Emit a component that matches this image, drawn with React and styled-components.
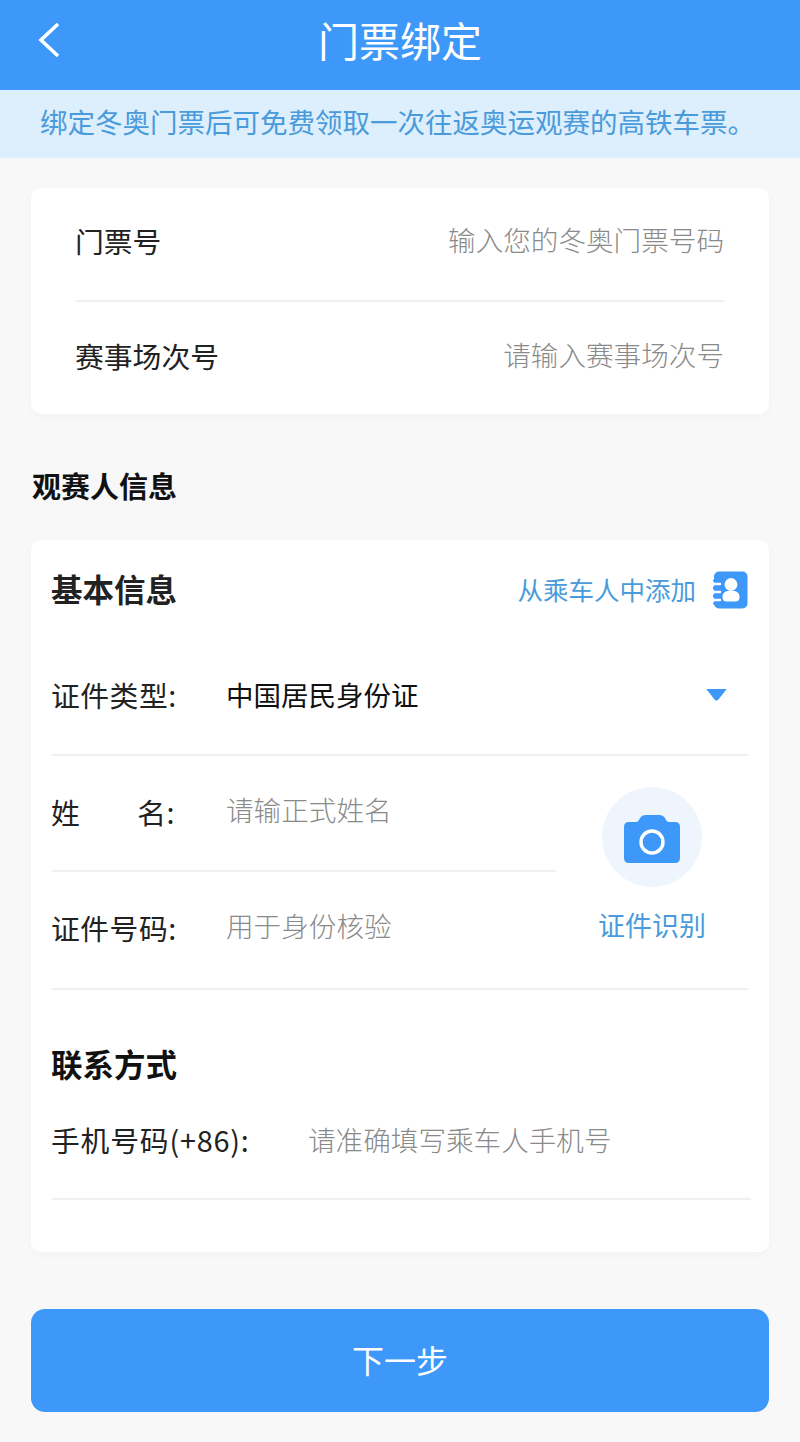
import React from 'react';
import styled, { createGlobalStyle } from 'styled-components';

const GlobalStyle = createGlobalStyle`
  html, body { margin: 0; padding: 0; background: #f8f8f9; }
  body { font-family: "Noto Sans CJK SC", "Noto Sans", sans-serif; }
  * { box-sizing: border-box; }
`;

const Page = styled.div`
  width: 800px;
  height: 1442px;
  overflow: hidden;
  background: #f8f8f9;
  display: flex;
  flex-direction: column;
`;
const Header = styled.header`
  height: 90px;
  background: #3d98f9;
  position: relative;
  display: flex;
  align-items: center;
  justify-content: center;
  color: #fff;
  font-size: 41px;
  font-weight: 400;
  line-height: 1;
  padding-bottom: 12px;
`;
const BackIcon = styled.svg`
  position: absolute;
  left: 36px;
  top: 21px;
`;
const Notice = styled.div`
  height: 68px;
  background: #ddeefc;
  color: #4a9bdb;
  font-size: 27.5px;
  line-height: 62px;
  padding-left: 40px;
  white-space: nowrap;
`;
const Content = styled.div`
  padding: 30px 31px 0;
  display: flex;
  flex-direction: column;
`;
const Card = styled.section`
  background: #fff;
  border-radius: 10px;
  box-shadow: 0 3px 10px rgba(0, 0, 0, 0.025);
`;
const TicketCard = styled(Card)`
  padding: 0 45px;
`;
const TicketRow = styled.div`
  height: ${p => (p.$last ? 112 : 114)}px;
  display: flex;
  align-items: center;
  justify-content: space-between;
  padding-bottom: ${p => (p.$last ? 5 : 7)}px;
  border-bottom: ${p => (p.$last ? 'none' : '2px solid #f0f0f1')};
`;
const TicketLabel = styled.span`
  font-size: 28.8px;
  color: #222;
  margin-left: -1px;
`;
const Hint = styled.span`
  font-size: 27.6px;
  font-weight: 300;
  color: #8a8a8a;
  white-space: nowrap;
  margin-bottom: 4px;
`;
const PhoneHint = styled(Hint)`
  margin-bottom: 0;
`;
const SectionTitle = styled.h2`
  margin: 50px 0 34px 1px;
  font-size: 29px;
  line-height: 42px;
  font-weight: 700;
  color: #111;
`;
const InfoCard = styled(Card)`
  height: 712px;
  padding: 0 21px;
`;
const BasicHead = styled.div`
  height: 100px;
  display: flex;
  align-items: center;
  justify-content: space-between;
`;
const GroupTitle = styled.h3`
  margin: 0 0 4px -1px;
  font-size: 31.5px;
  line-height: 44px;
  font-weight: 700;
  color: #222;
`;
const AddLink = styled.div`
  display: flex;
  align-items: center;
  gap: 17px;
  color: #4a9bdb;
  font-size: 25.5px;
`;
const AddText = styled.span`
  margin-bottom: 4px;
`;
const FieldRow = styled.div`
  height: ${p => p.$height || 116}px;
  display: flex;
  align-items: center;
  padding-bottom: ${p => p.$pad ?? 6}px;
  border-bottom: ${p => (p.$plain ? 'none' : '2px solid #f0f0f1')};
  margin-right: ${p => p.$overhang || 0}px;
`;
const FieldLabel = styled.span`
  width: ${p => p.$width || 175}px;
  flex-shrink: 0;
  margin-left: -1px;
  font-size: 28.8px;
  letter-spacing: ${p => p.$spacing ?? 0.5}px;
  color: #222;
  white-space: nowrap;
`;
const SpacedLabel = styled(FieldLabel)`
  display: flex;
  justify-content: space-between;
  width: 124px;
  margin-right: 51px;
`;
const FieldValue = styled.span`
  flex: 1;
  font-size: 27.5px;
  color: #111;
`;
const Arrow = styled.svg`
  margin-right: 21px;
  margin-top: 2px;
`;
const IdentityBlock = styled.div`
  display: flex;
  border-bottom: 2px solid #f0f0f1;
`;
const IdentityFields = styled.div`
  width: 504px;
`;
const ScanBox = styled.div`
  flex: 1;
  display: flex;
  flex-direction: column;
  align-items: center;
  padding-top: 31px;
`;
const ScanCircle = styled.div`
  width: 100px;
  height: 100px;
  border-radius: 50%;
  background: #eef5fc;
  display: flex;
  align-items: center;
  justify-content: center;
  padding-top: 4px;
`;
const ScanText = styled.span`
  margin-top: 18px;
  color: #4a9bdb;
  font-size: 27px;
  line-height: 40px;
`;
const ContactTitle = styled(GroupTitle)`
  margin-top: 51px;
  margin-bottom: 0;
  color: #111;
`;
const PhoneBlock = styled.div`
  margin-top: 13px;
`;
const NextButton = styled.button`
  margin-top: 57px;
  height: 103px;
  border: none;
  border-radius: 14px;
  background: #3d98f9;
  color: #fff;
  font-family: inherit;
  font-size: 32px;
  font-weight: 400;
  padding: 0 0 3px;
`;

const ContactsIcon = () => (
  <svg width="35" height="38" viewBox="0 0 35 38">
    <rect x="1" y="0.5" width="33.5" height="37" rx="5" fill="#3d98f9" />
    <path d="M0 13 H7 M0 21 H7 M0 29 H7" stroke="#fff" strokeWidth="2.4" strokeLinecap="round" />
    <path d="M0 9.6 H5 M0 16.4 H5 M0 17.6 H5 M0 24.4 H5 M0 25.6 H5 M0 32.4 H5" stroke="#3d98f9" strokeWidth="1.6" />
    <circle cx="18" cy="13.5" r="6.4" fill="#fff" />
    <path d="M9.5 26 C9.5 22 12.5 20 15 20 H21 C23.5 20 26.5 22 26.5 26 C26.5 29 25 30.5 22.5 30.5 H13.5 C11 30.5 9.5 29 9.5 26 Z" fill="#fff" />
  </svg>
);

const CameraIcon = () => (
  <svg width="56" height="48" viewBox="0 0 56 48">
    <path
      d="M5 7 H12 Q14 7 15 5 Q17 0 22 0 H35 Q40 0 42 5 Q43 7 45 7 H51 Q56 7 56 12 V43 Q56 48 51 48 H5 Q0 48 0 43 V12 Q0 7 5 7 Z"
      fill="#3d98f9"
    />
    <circle cx="28" cy="27" r="11" fill="none" stroke="#fff" strokeWidth="3.4" />
  </svg>
);

export default function App() {
  return (
    <Page>
      <GlobalStyle />
      <Header>
        <BackIcon width="28" height="38" viewBox="0 0 28 38">
          <path d="M22 3 L5 19 L22 35" fill="none" stroke="#fff" strokeWidth="3.6" />
        </BackIcon>
        门票绑定
      </Header>
      <Notice>绑定冬奥门票后可免费领取一次往返奥运观赛的高铁车票。</Notice>
      <Content>
        <TicketCard>
          <TicketRow>
            <TicketLabel>门票号</TicketLabel>
            <Hint>输入您的冬奥门票号码</Hint>
          </TicketRow>
          <TicketRow $last>
            <TicketLabel>赛事场次号</TicketLabel>
            <Hint>请输入赛事场次号</Hint>
          </TicketRow>
        </TicketCard>

        <SectionTitle>观赛人信息</SectionTitle>

        <InfoCard>
          <BasicHead>
            <GroupTitle>基本信息</GroupTitle>
            <AddLink>
              <AddText>从乘车人中添加</AddText>
              <ContactsIcon />
            </AddLink>
          </BasicHead>
          <FieldRow>
            <FieldLabel>证件类型:</FieldLabel>
            <FieldValue>中国居民身份证</FieldValue>
            <Arrow width="21" height="12" viewBox="0 0 21 12">
              <path d="M1 0 H20 Q21 0 20 1 L12 11 Q10.5 12 9 11 L1 1 Q0 0 1 0 Z" fill="#3d98f9" />
            </Arrow>
          </FieldRow>
          <IdentityBlock>
            <IdentityFields>
              <FieldRow $pad={4}>
                <SpacedLabel>
                  <span>姓</span>
                  <span>名:</span>
                </SpacedLabel>
                <Hint>请输正式姓名</Hint>
              </FieldRow>
              <FieldRow $plain $pad={6}>
                <FieldLabel>证件号码:</FieldLabel>
                <Hint>用于身份核验</Hint>
              </FieldRow>
            </IdentityFields>
            <ScanBox>
              <ScanCircle>
                <CameraIcon />
              </ScanCircle>
              <ScanText>证件识别</ScanText>
            </ScanBox>
          </IdentityBlock>
          <ContactTitle>联系方式</ContactTitle>
          <PhoneBlock>
            <FieldRow $height={102} $pad={18} $overhang={-3}>
              <FieldLabel $width={257} $spacing={0.8}>手机号码(+86):</FieldLabel>
              <PhoneHint>请准确填写乘车人手机号</PhoneHint>
            </FieldRow>
          </PhoneBlock>
        </InfoCard>

        <NextButton>下一步</NextButton>
      </Content>
    </Page>
  );
}
